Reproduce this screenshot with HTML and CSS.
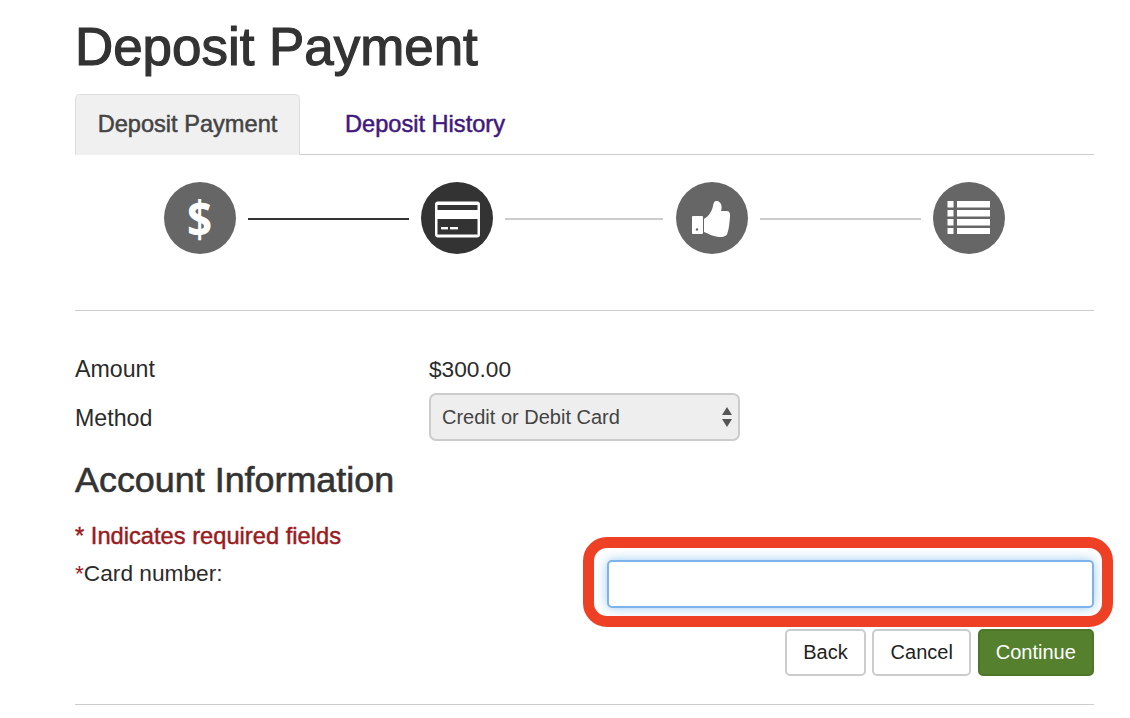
FILE: index.html
```html
<!DOCTYPE html>
<html lang="en">
<head>
  <meta charset="UTF-8">
  <meta name="viewport" content="width=device-width, initial-scale=1.0">
  <title>Deposit Payment</title>
  <link rel="stylesheet" href="styles.css">
</head>
<body>
  <main class="page">
    <h1>Deposit Payment</h1>

    <nav class="tabs">
      <a class="tab tab-active" href="#">Deposit Payment</a>
      <a class="tab tab-link" href="#">Deposit History</a>
    </nav>

    <div class="steps">
      <div class="step"><span class="step-dollar">$</span></div>
      <div class="step-line step-line-done"></div>
      <svg class="step-icon" viewBox="0 0 72 72" aria-hidden="true">
        <circle cx="36" cy="36" r="36" fill="#333"/>
        <rect x="14" y="19.500" width="45" height="36" rx="3" fill="#fff"/>
        <rect x="16.500" y="23" width="40" height="5" fill="#333"/>
        <rect x="16.500" y="37" width="40" height="15.500" fill="#333"/>
        <rect x="20" y="45" width="7" height="2.400" fill="#fff"/>
        <rect x="29" y="45" width="8" height="2.400" fill="#fff"/>
      </svg>
      <div class="step-line"></div>
      <svg class="step-icon" viewBox="0 0 72 72" aria-hidden="true">
        <circle cx="36" cy="36" r="36" fill="#666"/>
        <path d="M17 34h9a1 1 0 0 1 1 1v16a1 1 0 0 1-1 1h-9a1 1 0 0 1-1-1V35a1 1 0 0 1 1-1z" fill="#fff"/>
        <circle cx="21" cy="47.500" r="1.200" fill="#666"/>
        <path d="M28 37C33 34 36 29 37 24C37.500 20 39 18.500 41 19C44.500 19.500 46 23 45.500 27L45 29L51 29C53.500 29 54.500 32 54 35C53.500 40 53 47 51.500 51C51 54 47 55.500 43 55C37 54.500 32 51.500 28 50Z" fill="#fff"/>
      </svg>
      <div class="step-line"></div>
      <svg class="step-icon" viewBox="0 0 72 72" aria-hidden="true">
        <circle cx="36" cy="36" r="36" fill="#666"/>
        <g fill="#fff">
          <rect x="14.500" y="19" width="6" height="6.500"/>
          <rect x="24" y="19" width="33" height="6.500"/>
          <rect x="14.500" y="28" width="6" height="6.500"/>
          <rect x="24" y="28" width="33" height="6.500"/>
          <rect x="14.500" y="37" width="6" height="6.500"/>
          <rect x="24" y="37" width="33" height="6.500"/>
          <rect x="14.500" y="46" width="6" height="6"/>
          <rect x="24" y="46" width="33" height="6"/>
        </g>
      </svg>
    </div>

    <form class="deposit-form">
      <div class="form-row row-amount">
        <span class="row-label">Amount</span>
        <span>$300.00</span>
      </div>
      <div class="form-row row-method">
        <label class="row-label method-label" for="method">Method</label>
        <div class="select-wrap">
          <select id="method">
            <option>Credit or Debit Card</option>
          </select>
          <svg class="select-arrows" viewBox="0 0 10 20" aria-hidden="true">
            <path d="M5 0L10 8H0Z M0 12H10L5 20Z" fill="#555"/>
          </svg>
        </div>
      </div>

      <h2>Account Information</h2>
      <p class="required-note">* Indicates required fields</p>

      <div class="card-row">
        <label for="card"><span class="star">*</span>Card number:</label>
        <div class="card-input-wrap">
          <input id="card" type="text">
          <span class="highlight"></span>
        </div>
      </div>

      <div class="actions">
        <button class="btn" type="button">Back</button>
        <button class="btn" type="button">Cancel</button>
        <button class="btn btn-primary" type="submit">Continue</button>
      </div>
    </form>

    <hr class="bottom-rule">
  </main>
</body>
</html>
```

FILE: styles.css
```css
body {
  margin: 0;
  font-family: "Liberation Sans", Arial, sans-serif;
  font-size: 22.7px;
  color: #2b2b2b;
  background: #fff;
}

.page {
  width: 1019px;
  margin-left: 75px;
}

h1 {
  margin: 0;
  font-size: 52.9px;
  line-height: 94px;
  font-weight: normal;
  color: #333;
  -webkit-text-stroke: 1.2px #333;
}

.tabs {
  display: flex;
  height: 60px;
  border-bottom: 1px solid #ccc;
  font-size: 23.6px;
}

.tab {
  box-sizing: border-box;
  line-height: 58px;
  text-decoration: none;
}

.tab-link {
  padding-left: 45px;
  line-height: 60px;
  color: #41197c;
  -webkit-text-stroke: 0.5px #41197c;
}

.tab-active {
  width: 225px;
  height: 61px;
  text-align: center;
  background: #f0f0f0;
  border: 1px solid #ddd;
  border-bottom-color: #f0f0f0;
  border-radius: 5px 5px 0 0;
  color: #444;
  -webkit-text-stroke: 0.5px #444;
}

.steps {
  display: grid;
  grid-template-columns: 72px 161px 72px 158px 72px 161px 72px;
  column-gap: 12.25px;
  align-items: center;
  align-content: start;
  height: 156px;
  padding: 27px 0 0 88.5px;
  box-sizing: border-box;
  border-bottom: 1px solid #ccc;
}

.step {
  width: 72px;
  height: 72px;
  border-radius: 50%;
  background: #666;
  color: #fff;
  font-family: "Open Sans", sans-serif;
  font-weight: 700;
  font-size: 44px;
  line-height: 72px;
  text-align: center;
}

.step-dollar {
  display: inline-block;
  transform: scaleY(1.12);
}

.step-icon {
  display: block;
  width: 72px;
  height: 72px;
}

.step-line {
  height: 2px;
  margin-top: 2px;
  background: #ccc;
}

.step-line-done {
  background: #333;
}

.form-row {
  display: grid;
  grid-template-columns: 354px 311px;
  align-items: center;
}

.row-label {
  font-size: 23.2px;
}

.method-label {
  padding-top: 2px;
}

.row-amount {
  margin-top: 40px;
  height: 36px;
}

.row-method {
  margin-top: 6px;
  height: 48px;
}

.select-wrap {
  position: relative;
}

select {
  display: block;
  width: 100%;
  height: 48px;
  padding: 0 11px;
  font: inherit;
  font-size: 20px;
  color: #444;
  background: #eee;
  border: 2px solid #ccc;
  border-radius: 7px;
  appearance: none;
}

.select-arrows {
  position: absolute;
  top: 14px;
  right: 8px;
  width: 10px;
  height: 20px;
}

h2 {
  margin: 17px 0 0;
  font-size: 35.9px;
  line-height: 44px;
  font-weight: normal;
  color: #333;
  -webkit-text-stroke: 0.6px #333;
}

.required-note {
  margin: 18px 0 0;
  font-size: 23.7px;
  line-height: 32px;
  color: #991b1e;
  -webkit-text-stroke: 0.45px #991b1e;
}

.card-row {
  display: flex;
  justify-content: space-between;
  margin-top: 8px;
}

.card-row label {
  line-height: 26px;
}

.star {
  color: #991b1e;
}

.card-input-wrap {
  position: relative;
  width: 487px;
  height: 48px;
}

input {
  display: block;
  box-sizing: border-box;
  width: 100%;
  height: 100%;
  border: 2px solid #7fb2e8;
  border-radius: 5px;
  box-shadow: 0 0 12px rgba(102, 175, 233, 0.65);
  outline: none;
}

.highlight {
  position: absolute;
  top: -23px;
  left: -24px;
  width: 530px;
  height: 90px;
  box-sizing: border-box;
  border: 11px solid #ee4024;
  border-radius: 24px;
  pointer-events: none;
}

.actions {
  display: flex;
  justify-content: flex-end;
  gap: 6.500px;
  margin-top: 21px;
}

.btn {
  height: 47px;
  padding: 0 16.200px;
  font: inherit;
  font-size: 20px;
  color: #222;
  background: #fff;
  border: 2px solid #ccc;
  border-radius: 5px;
}

.btn-primary {
  color: #fff;
  background: #55812f;
  border-color: #4d762a;
}

.bottom-rule {
  margin: 28px 0 0;
  border: 0;
  border-top: 1px solid #ccc;
}
```
